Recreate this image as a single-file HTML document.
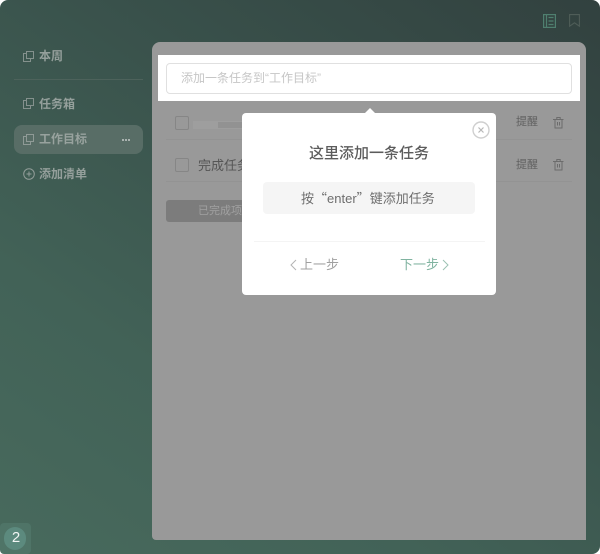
<!DOCTYPE html>
<html><head><meta charset="utf-8">
<style>
html,body{margin:0;padding:0;width:600px;height:554px;overflow:hidden;background:#fff}
*{box-sizing:border-box}
body{font-family:"Liberation Sans","Noto Sans CJK SC",sans-serif}
#w{position:absolute;left:0;top:0;width:600px;height:554px;filter:blur(.35px)}
.a{position:absolute;white-space:nowrap}
#bg{position:absolute;left:0;top:0;width:600px;height:554px;border-radius:8px;background:linear-gradient(215deg,#32413f 0%,#39514b 35%,#426257 70%,#486a5d 100%)}
.nav{font-size:12px;font-weight:bold;color:#949f9b;line-height:16px}
.q{font-family:"Noto Sans CJK SC",sans-serif}
svg{position:absolute;overflow:visible}
</style></head><body><div id="w">
<div id="bg"></div>

<svg style="left:543px;top:14px" width="13" height="14" fill="none" stroke="#4f7f6f" stroke-width="1.2"><rect x="0.6" y="0.6" width="11.8" height="12.8"/><path d="M3.5 .6v12.8M5.5 3.5h5M5.5 7h5M5.5 10.5h5"/></svg>
<svg style="left:569px;top:14px" width="11" height="13" fill="none" stroke="#4f5d58" stroke-width="1.1"><path d="M.6 .6h9.8v11.6l-4.9-3.4-4.9 3.4z"/></svg>

<svg style="left:23px;top:51px" width="11" height="11" fill="none" stroke="#84918d"><path d="M3.5 .5h7v7h-7zM3.5 2.5h-3v8h7v-3"/></svg>
<div class="a nav" style="left:39px;top:48px">本周</div>
<div class="a" style="left:14px;top:79px;width:129px;height:1px;background:#4d625b"></div>
<svg style="left:23px;top:98px" width="11" height="11" fill="none" stroke="#84918d"><path d="M3.5 .5h7v7h-7zM3.5 2.5h-3v8h7v-3"/></svg>
<div class="a nav" style="left:39px;top:96px">任务箱</div>
<div class="a" style="left:14px;top:125px;width:129px;height:29px;border-radius:8px;background:#586d66"></div>
<svg style="left:23px;top:134px" width="11" height="11" fill="none" stroke="#8f9a96"><path d="M3.5 .5h7v7h-7zM3.5 2.5h-3v8h7v-3"/></svg>
<div class="a nav" style="left:39px;top:131px;color:#98a29e">工作目标</div>
<div class="a" style="left:122px;top:139px;width:2px;height:2px;background:#a9b2af;box-shadow:3px 0 #a9b2af,6px 0 #a9b2af"></div>
<svg style="left:23px;top:168px" width="12" height="12" fill="none" stroke="#929d99"><circle cx="6" cy="6" r="5.3"/><path d="M3.5 6h5M6 3.5v5"/></svg>
<div class="a nav" style="left:39px;top:166px">添加清单</div>

<div class="a" style="left:0;top:523px;width:31px;height:31px;border-radius:4px;background:#4f7467"></div>
<div class="a" style="left:4px;top:527px;width:22px;height:23px;border-radius:11px;background:#5c8a7e"></div>
<div class="a" style="left:4px;top:529px;width:24px;text-align:center;font-size:15px;line-height:17px;color:#f2f6f5">2</div>

<!-- main panel -->
<div class="a" style="left:152px;top:42px;width:434px;height:498px;border-radius:8px 8px 0 4px;background:#999"></div>
<div class="a" style="left:158px;top:55px;width:422px;height:46px;background:#fff"></div>
<div class="a" style="left:166px;top:63px;width:406px;height:31px;border:1px solid #e0e0e0;border-radius:4px;background:#fff"></div>
<div class="a" style="left:181px;top:70px;font-size:12px;line-height:16px;color:#c6c6c6">添加一条任务到“工作目标”</div>

<!-- rows -->
<div class="a" style="left:175px;top:116px;width:14px;height:14px;border:1px solid #868686;border-radius:2px"></div>
<div class="a" style="left:193px;top:121px;width:50px;height:8px;background:#9e9e9e"></div>
<div class="a" style="left:218px;top:122px;width:25px;height:6px;background:#929292"></div>
<div class="a" style="left:166px;top:139px;width:406px;height:1px;background:#939393"></div>
<div class="a" style="left:175px;top:158px;width:14px;height:14px;border:1px solid #868686;border-radius:2px"></div>
<div class="a" style="left:198px;top:157px;font-size:13px;line-height:17px;color:#555">完成任务</div>
<div class="a" style="left:166px;top:181px;width:406px;height:1px;background:#939393"></div>
<div class="a" style="left:166px;top:200px;width:90px;height:22px;border-radius:3px;background:#7c7c7c"></div>
<div class="a" style="left:198px;top:204px;font-size:11px;line-height:15px;color:#a0a0a0">已完成项</div>

<div class="a" style="left:516px;top:115px;font-size:11px;line-height:15px;color:#606060">提醒</div>
<div class="a" style="left:516px;top:158px;font-size:11px;line-height:15px;color:#606060">提醒</div>
<svg style="left:553px;top:117px" width="11" height="12" fill="none" stroke="#6c6c6c"><path d="M0 2.5h10.5M2 2.5v8.5h7v-8.5M3.8 2.5v-2h3.4v2M4.5 5v3.5M6.5 5v3.5"/></svg>
<svg style="left:553px;top:159px" width="11" height="12" fill="none" stroke="#6c6c6c"><path d="M0 2.5h10.5M2 2.5v8.5h7v-8.5M3.8 2.5v-2h3.4v2M4.5 5v3.5M6.5 5v3.5"/></svg>

<!-- popup -->
<div class="a" style="left:365px;top:108px;width:0;height:0;border-left:5px solid transparent;border-right:5px solid transparent;border-bottom:5px solid #fff"></div>
<div class="a" style="left:242px;top:113px;width:254px;height:182px;border-radius:4px;background:#fff"></div>
<svg style="left:472px;top:121px" width="18" height="18" fill="none"><circle cx="9" cy="9" r="8" stroke="#cfcfcf" stroke-width="1.4"/><path d="M6.5 6.5l5 5M11.5 6.5l-5 5" stroke="#b8b8b8" stroke-width="1.2"/></svg>
<div class="a" style="left:242px;width:254px;top:144px;text-align:center;font-size:15px;font-weight:500;line-height:19px;color:#5c5c5c">这里添加一条任务</div>
<div class="a" style="left:263px;top:182px;width:212px;height:32px;border-radius:4px;background:#f5f5f5"></div>
<div class="a" style="left:301px;top:189px;font-size:13px;line-height:17px;color:#6e6e6e">按<span class="q">“</span>enter<span class="q">”</span>键添加任务</div>
<div class="a" style="left:254px;top:241px;width:231px;height:1px;background:#f4f4f4"></div>
<svg style="left:290px;top:259px" width="7" height="12" fill="none" stroke="#b4b4b4" stroke-width="1"><path d="M6 1L1 6l5 5"/></svg>
<div class="a" style="left:300px;top:256px;font-size:13px;line-height:17px;color:#a0a0a0">上一步</div>
<div class="a" style="left:400px;top:256px;font-size:13px;line-height:17px;color:#80b3a0">下一步</div>
<svg style="left:442px;top:259px" width="7" height="12" fill="none" stroke="#9cc2b3" stroke-width="1"><path d="M1 1l5 5-5 5"/></svg>
</div></body></html>
